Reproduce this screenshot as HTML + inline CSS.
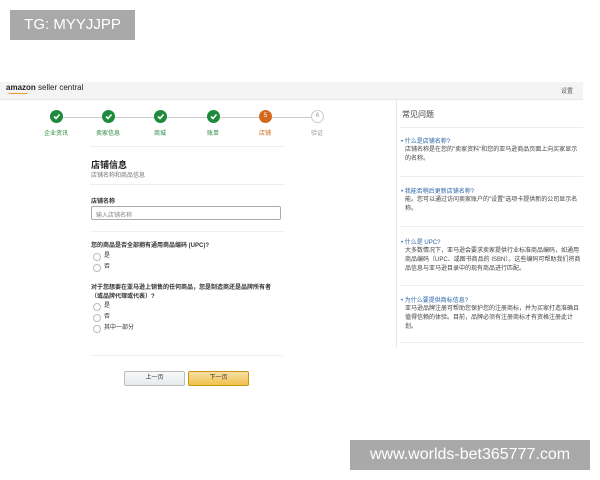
<!DOCTYPE html>
<html><head><meta charset="utf-8"><style>
*{margin:0;padding:0;box-sizing:border-box}
body{width:600px;height:480px;background:#fff;position:relative;overflow:hidden;font-family:"Liberation Sans","Noto Sans CJK SC",sans-serif;color:#333}
.a{position:absolute}
.lab{background:#a9a9a9;color:#fff;font-size:15px;line-height:30px;text-align:center}
.c{width:13px;height:13px;border-radius:50%;background:#1e8a3c}
.c svg{position:absolute;left:2px;top:2px}
.sl{font-size:6px;color:#2a8a3c;width:40px;text-align:center}
.t{font-size:6px;line-height:9px}
.q{font-size:6px;color:#2a64a8}
.r{width:8px;height:8px;border:1px solid #bbb;border-radius:50%}
</style></head><body>
<div class="a lab" style="left:10px;top:10px;width:125px;height:30px">TG: MYYJJPP</div>
<div class="a lab" style="left:350px;top:440px;width:240px;height:30px;font-size:16px">www.worlds-bet365777.com</div>

<div class="a" style="left:0;top:82px;width:583px;height:18px;background:#f4f4f4;border-bottom:1px solid #e6e6e6"></div>
<div class="a" style="left:6px;top:83px;font-size:8px;color:#222"><b>amazon</b> seller central</div>
<div class="a" style="left:8px;top:92px;width:20px;height:2px;border-bottom:1px solid #e89a2c;border-radius:0 0 10px 10px"></div>
<div class="a" style="left:561px;top:86px;font-size:6px;color:#555">设置</div>

<div class="a" style="left:57px;top:117px;width:262px;height:1px;background:#ccc"></div>
<div class="a c" style="left:50px;top:110px"><svg width="9" height="9"><path d="M2 4.5l2 2 3.5-4" stroke="#fff" stroke-width="1.6" fill="none"/></svg></div>
<div class="a c" style="left:102px;top:110px"><svg width="9" height="9"><path d="M2 4.5l2 2 3.5-4" stroke="#fff" stroke-width="1.6" fill="none"/></svg></div>
<div class="a c" style="left:154px;top:110px"><svg width="9" height="9"><path d="M2 4.5l2 2 3.5-4" stroke="#fff" stroke-width="1.6" fill="none"/></svg></div>
<div class="a c" style="left:207px;top:110px"><svg width="9" height="9"><path d="M2 4.5l2 2 3.5-4" stroke="#fff" stroke-width="1.6" fill="none"/></svg></div>
<div class="a c" style="left:259px;top:110px;background:#d4691e;color:#fff;font-size:6px;text-align:center;line-height:13px">5</div>
<div class="a c" style="left:311px;top:110px;background:#fff;border:1px solid #ccc;color:#999;font-size:6px;text-align:center;line-height:11px">6</div>
<div class="a sl" style="left:36px;top:128px">企业资讯</div>
<div class="a sl" style="left:88px;top:128px">卖家信息</div>
<div class="a sl" style="left:140px;top:128px">商城</div>
<div class="a sl" style="left:193px;top:128px">账单</div>
<div class="a sl" style="left:245px;top:128px;color:#d4691e">店铺</div>
<div class="a sl" style="left:297px;top:128px;color:#999">验证</div>

<div class="a" style="left:90px;top:146px;width:195px;height:1px;background:#eee"></div>
<div class="a" style="left:91px;top:158px;font-size:9px;font-weight:bold;color:#222">店铺信息</div>
<div class="a" style="left:91px;top:170px;font-size:6px;color:#777">店铺名称和商品信息</div>
<div class="a" style="left:90px;top:184px;width:195px;height:1px;background:#eee"></div>
<div class="a" style="left:91px;top:196px;font-size:6px;font-weight:bold">店铺名称</div>
<div class="a" style="left:91px;top:206px;width:190px;height:14px;border:1px solid #aaa;border-radius:2px;font-size:6px;color:#888;padding:3px 4px">输入店铺名称</div>
<div class="a" style="left:90px;top:231px;width:195px;height:1px;background:#f0f0f0"></div>
<div class="a t" style="left:91px;top:242px;font-weight:bold">您的商品是否全部拥有通用商品编码 (UPC)?</div>
<div class="a r" style="left:93px;top:253px"></div><div class="a t" style="left:104px;top:252px">是</div>
<div class="a r" style="left:93px;top:264px"></div><div class="a t" style="left:104px;top:263px">否</div>
<div class="a t" style="left:91px;top:284px;font-weight:bold;width:230px">对于您想要在亚马逊上销售的任何商品，您是制造商还是品牌所有者<br>（或品牌代理或代表）?</div>
<div class="a r" style="left:93px;top:303px"></div><div class="a t" style="left:104px;top:302px">是</div>
<div class="a r" style="left:93px;top:314px"></div><div class="a t" style="left:104px;top:313px">否</div>
<div class="a r" style="left:93px;top:325px"></div><div class="a t" style="left:104px;top:324px">其中一部分</div>
<div class="a" style="left:92px;top:355px;width:190px;height:1px;background:#eee"></div>
<div class="a" style="left:124px;top:371px;width:61px;height:15px;border:1px solid #bbb;border-radius:2px;background:linear-gradient(#f7f8fa,#e7e9ec);font-size:6px;text-align:center;line-height:13px">上一页</div>
<div class="a" style="left:188px;top:371px;width:61px;height:15px;border:1px solid #c89411;border-radius:2px;background:linear-gradient(#f7dfa5,#f0c14b);font-size:6px;text-align:center;line-height:13px">下一页</div>

<div class="a" style="left:396px;top:100px;width:1px;height:248px;background:#e6e6e6"></div>
<div class="a" style="left:402px;top:109px;font-size:8px;color:#444">常见问题</div>
<div class="a" style="left:400px;top:127px;width:183px;height:1px;background:#eee"></div>
<div class="a q" style="left:401px;top:136px">• 什么是店铺名称?</div>
<div class="a t" style="left:405px;top:146px;width:178px;color:#444">店铺名称是在您的"卖家资料"和您的亚马逊商品页面上向买家显示的名称。</div>
<div class="a" style="left:400px;top:176px;width:183px;height:1px;background:#eee"></div>
<div class="a q" style="left:401px;top:186px">• 我能否稍后更新店铺名称?</div>
<div class="a t" style="left:405px;top:196px;width:178px;color:#444">能。您可以通过访问卖家账户的"设置"选项卡提供新的公司显示名称。</div>
<div class="a" style="left:400px;top:226px;width:183px;height:1px;background:#eee"></div>
<div class="a q" style="left:401px;top:237px">• 什么是 UPC?</div>
<div class="a t" style="left:405px;top:247px;width:178px;color:#444">大多数情况下，亚马逊会要求卖家提供行业标准商品编码，如通用商品编码（UPC、或图书商品的 ISBN）。这些编码可帮助我们将商品信息与亚马逊目录中的现有商品进行匹配。</div>
<div class="a" style="left:400px;top:285px;width:183px;height:1px;background:#eee"></div>
<div class="a q" style="left:401px;top:295px">• 为什么要提供商标信息?</div>
<div class="a t" style="left:405px;top:305px;width:178px;color:#444">亚马逊品牌注册可帮助您保护您的注册商标，并为买家打造准确且值得信赖的体验。目前，品牌必须有注册商标才有资格注册此计划。</div>
<div class="a" style="left:400px;top:342px;width:183px;height:1px;background:#eee"></div>
</body></html>
